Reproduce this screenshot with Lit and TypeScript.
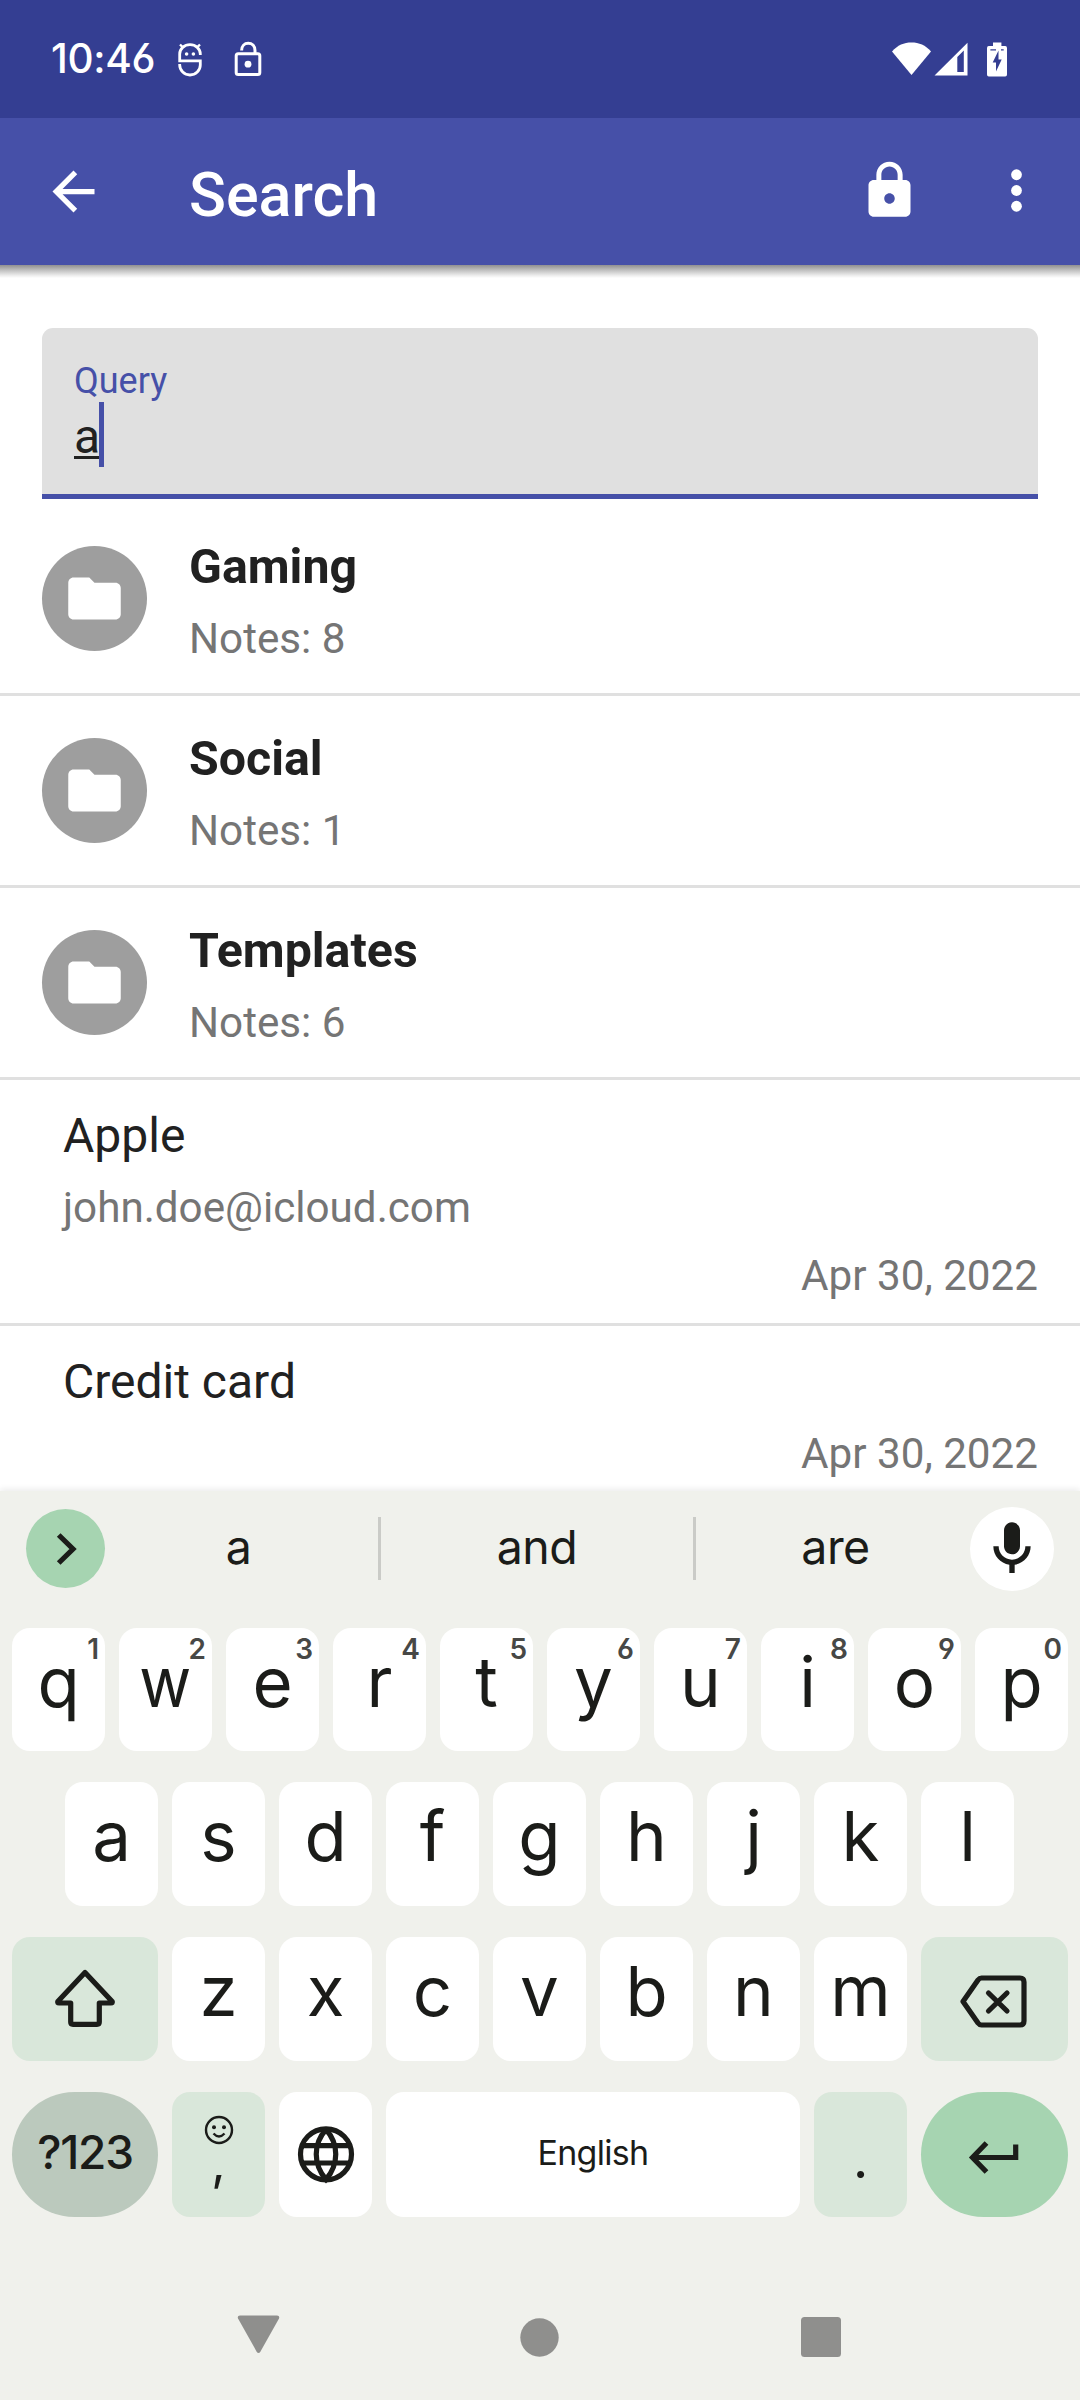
import { LitElement, html, css, svg, nothing } from "lit";
import { customElement, property, state } from "lit/decorators.js";
import { classMap } from "lit/directives/class-map.js";

interface Folder {
  name: string;
  count: number;
}

interface Note {
  title: string;
  detail?: string;
  date: string;
}

@customElement("status-bar")
export class StatusBar extends LitElement {
  static styles = css`
    :host {
      display: flex;
      align-items: center;
      justify-content: space-between;
      box-sizing: border-box;
      height: 118px;
      flex: none;
      padding: 0 73px 0 51px;
      background: #343e92;
      color: #fff;
    }
    .side {
      display: flex;
      align-items: center;
    }
    .clock {
      font: 500 40.5px/48px Inter, sans-serif;
      font-feature-settings: "cv03", "cv04";
      letter-spacing: -0.3px;
      width: 105px;
      white-space: nowrap;
    }
    svg {
      display: block;
      fill: #fff;
    }
    .line {
      fill: none;
      stroke: #fff;
    }
    .agent {
      margin: 2px 0 0 20px;
    }
    .unlocked {
      margin-left: 30px;
    }
    .signal {
      margin-left: 3px;
    }
    .battery {
      margin-left: 19px;
    }
    .cut {
      fill: #343e92;
    }
  `;

  render() {
    return html`
      <div class="side">
        <span class="clock">10:46</span>
        <svg class="agent" width="28" height="36" viewBox="-14 -18 28 36">
          <path class="line" stroke-width="2.8" d="M10.3 -5V-6A10.3 9.4 0 0 0 -10.3 -6V0.8H10.3V5A10.3 10 0 0 1 -10.3 5V4" />
          <path class="line" stroke-width="2.4" d="M-10 -15.5L-6.6 -12.2M10 -15.5L6.6 -12.2" />
          <circle cx="-3.4" cy="-6" r="1.8" />
          <circle cx="3.4" cy="-6" r="1.8" />
        </svg>
        <svg class="unlocked" width="28" height="36" viewBox="0 0 28 36">
          <rect class="line" stroke-width="3" x="2.2" y="12.8" width="23.6" height="20.8" rx="2" />
          <path class="line" stroke-width="3" d="M7.6 9.5C7.6 5 10.5 2.2 14.2 2.2S21 5 21 9.5V13" />
          <circle cx="14" cy="23.2" r="3.4" />
        </svg>
      </div>
      <div class="side">
        <svg width="39" height="34" viewBox="0 0 39 34">
          <path d="M0 9.5C5.5 3 12 0.4 19.5 0.4S33.5 3 39 9.5L19.5 33Z" />
        </svg>
        <svg class="signal" width="34" height="34" viewBox="0 0 34 34">
          <path fill-rule="evenodd" d="M0.5 33.5L33.5 0.8V33.5ZM23.3 15V30H29.8V8.5Z" />
        </svg>
        <svg class="battery" width="20" height="35" viewBox="0 0 20 35">
          <path d="M6 0.5H14.4V4H18.2Q20 4 20 6V32.6Q20 34.5 18.2 34.5H1.8Q0 34.5 0 32.6V6Q0 4 1.8 4H6Z" />
          <path class="cut" d="M11.5 8.500L5.7 20.5H9V29.5L14.7 17.5H11.5ZM3.4 7.3H9V8.4H3.4ZM14 7.3H16.7V8.4H14Z" />
        </svg>
      </div>
    `;
  }
}

@customElement("app-bar")
export class AppBar extends LitElement {
  @property() heading = "";

  static styles = css`
    :host {
      display: flex;
      align-items: center;
      box-sizing: border-box;
      height: 147px;
      flex: none;
      padding: 0 32px 0 42px;
      background: #4650a8;
      color: #fff;
    }
    svg {
      display: block;
      width: 63px;
      height: 63px;
      fill: #fff;
    }
    .heading {
      margin: 6px auto 0 84px;
      font: 500 61px/72px Roboto, sans-serif;
    }
    .lock {
      margin: 0 64px 2px 0;
    }
    .more {
      margin-bottom: 2px;
    }
  `;

  render() {
    return html`
      <svg viewBox="0 0 24 24"><path d="M20 11H7.83l5.59-5.59L12 4l-8 8 8 8 1.41-1.41L7.83 13H20v-2z" /></svg>
      <span class="heading">${this.heading}</span>
      <svg class="lock" viewBox="0 0 24 24">
        <path d="M18 8h-1V6c0-2.760-2.240-5-5-5S7 3.240 7 6v2H6c-1.100 0-2 .9-2 2v10c0 1.100.9 2 2 2h12c1.100 0 2-.9 2-2V10c0-1.100-.9-2-2-2zm-6 9c-1.100 0-2-.9-2-2s.9-2 2-2 2 .9 2 2-.9 2-2 2zm3.100-9H8.900V6c0-1.710 1.390-3.100 3.100-3.100 1.710 0 3.100 1.390 3.100 3.100v2z" />
      </svg>
      <svg class="more" viewBox="0 0 24 24">
        <circle cx="12" cy="6" r="2.05" /><circle cx="12" cy="12" r="2.05" /><circle cx="12" cy="18" r="2.05" />
      </svg>
    `;
  }
}

@customElement("search-results")
export class SearchResults extends LitElement {
  @property() query = "";
  @property({ attribute: false }) folders: Folder[] = [];
  @property({ attribute: false }) notes: Note[] = [];

  static styles = css`
    :host {
      display: flex;
      flex-direction: column;
      flex: 1;
      min-height: 0;
      overflow: hidden;
      background: #fff;
      font-family: Roboto, sans-serif;
    }
    .shade {
      flex: none;
      height: 13px;
      background: linear-gradient(#909090, #c0c0c0 40%, #ececec 80%, #fff);
    }
    .field {
      flex: none;
      box-sizing: border-box;
      height: 171px;
      margin: 50px 42px 5px;
      padding: 32px 32px 0;
      background: #e0e0e0;
      border-radius: 11px 11px 0 0;
      border-bottom: 5px solid #4650a8;
    }
    .label {
      font-size: 36px;
      line-height: 42px;
      color: #4650a8;
    }
    .entry {
      display: flex;
      height: 65px;
      font-size: 48px;
      line-height: 69px;
      color: #212121;
    }
    .typed {
      text-decoration: underline;
      text-decoration-thickness: 3px;
      text-underline-offset: 3px;
      text-decoration-skip-ink: none;
    }
    .caret {
      width: 5px;
      height: 65px;
      margin-left: -1px;
      background: #4650a8;
    }
    .folder {
      flex: none;
      box-sizing: border-box;
      display: flex;
      height: 192px;
      gap: 42px;
      padding-left: 42px;
      border-bottom: 3px solid #e0e0e0;
    }
    .badge {
      display: grid;
      place-items: center;
      width: 105px;
      height: 105px;
      margin-top: 42px;
      border-radius: 50%;
      background: #9e9e9e;
    }
    .badge svg {
      width: 63px;
      height: 63px;
      fill: #fff;
    }
    .text {
      display: flex;
      flex-direction: column;
      gap: 18.5px;
      padding-top: 35px;
    }
    .title {
      font-size: 48px;
      line-height: 56px;
      color: #212121;
    }
    .folder .title {
      font-size: 48.3px;
      font-weight: 700;
    }
    .sub {
      font-size: 42.2px;
      line-height: 50px;
      color: #757575;
    }
    .note {
      flex: none;
      display: flex;
      flex-direction: column;
      gap: 18.5px;
      box-sizing: border-box;
      padding: 28px 42px 0 63px;
      border-bottom: 3px solid #e0e0e0;
    }
    .note .sub:last-child {
      text-align: right;
      padding-bottom: 22px;
    }
  `;

  render() {
    return html`
      <div class="shade"></div>
      <div class="field">
        <div class="label">Query</div>
        <div class="entry"><span class="typed">${this.query}</span><span class="caret"></span></div>
      </div>
      ${this.folders.map(
        (f) => html`
          <div class="folder">
            <div class="badge">
              <svg viewBox="0 0 24 24"><path d="M10 4H4c-1.100 0-1.990.9-1.990 2L2 18c0 1.100.9 2 2 2h16c1.100 0 2-.9 2-2V8c0-1.100-.9-2-2-2h-8l-2-2z" /></svg>
            </div>
            <div class="text">
              <div class="title">${f.name}</div>
              <div class="sub">Notes: ${f.count}</div>
            </div>
          </div>
        `
      )}
      ${this.notes.map(
        (n) => html`
          <div class="note">
            <div class="title">${n.title}</div>
            ${n.detail ? html`<div class="sub">${n.detail}</div>` : nothing}
            <div class="sub">${n.date}</div>
          </div>
        `
      )}
    `;
  }
}

const shiftIcon = svg`<path class="pen" d="M0 -26.500L-27.200 2.500Q-28 4 -26 4H-14.300V23Q-14.300 25.300 -12 25.300H12Q14.300 25.300 14.300 23V4H26Q28 4 27.200 2.500Z" />`;
const backspaceIcon = svg`<path class="pen" d="M-32 2.500L-17 -19Q-15.500 -21 -13.500 -21H25Q29 -21 29 -17V22Q29 26 25 26H-13.500Q-15.500 26 -17 24Z" /><path class="pen cap" d="M-6.500 -6L12 12M12 -6L-6.500 12" />`;
const enterIcon = svg`<path class="pen" d="M20.700 -10.500V2.500H-21M-8.500 -12L-22.500 2.500L-8.500 17" />`;
const globeIcon = svg`<circle class="pen" cx="0" cy="-0.700" r="25.500" /><path class="pen" d="M0 -25.500C-13 -11 -13 9 0 24.500C13 9 13 -11 0 -25.500M-23 -9.400H23M-23 8H23" />`;

@customElement("soft-keyboard")
export class SoftKeyboard extends LitElement {
  @property({ attribute: false }) words: string[] = [];

  static styles = css`
    :host {
      display: flex;
      flex-direction: column;
      flex: none;
      height: 909px;
      background: #f0f1ec;
      color: #1b1c19;
      font-family: Inter, sans-serif;
      box-shadow: 0 -2px 6px rgba(0, 0, 0, 0.08);
      z-index: 1;
    }
    svg {
      display: block;
      overflow: visible;
    }
    .pen {
      fill: none;
      stroke: #1b1c19;
      stroke-width: 5.2;
    }
    .thin {
      stroke-width: 2.4;
    }
    .tint .pen {
      stroke-linejoin: round;
    }
    .cap {
      stroke-linecap: round;
    }
    .strip {
      display: grid;
      grid-template-columns: 99px 279px 3px 312px 3px 279px 1fr;
      align-items: center;
      justify-items: center;
      height: 115px;
      margin-bottom: 22px;
    }
    .expand {
      display: grid;
      place-items: center;
      justify-self: end;
      width: 79px;
      height: 79px;
      margin-right: -6px;
      border-radius: 50%;
      background: #a6d4b1;
    }
    .mic {
      display: grid;
      place-items: center;
      justify-self: start;
      width: 84px;
      height: 84px;
      margin-left: -5px;
      border-radius: 50%;
      background: #fff;
    }
    .word {
      font-size: 46.5px;
      line-height: 58px;
      padding-bottom: 4px;
      letter-spacing: -0.5px;
    }
    .rule {
      width: 3px;
      height: 63px;
      background: #cacbc7;
    }
    .rows {
      display: grid;
      grid-template-rows: 123px 124px 124px 125px;
      row-gap: 31px;
      padding: 0 12px;
    }
    .row {
      display: flex;
      gap: 14px;
    }
    .row.inset {
      padding-left: 53px;
    }
    .key {
      position: relative;
      display: flex;
      align-items: center;
      justify-content: center;
      box-sizing: border-box;
      width: 93px;
      flex: none;
      padding-bottom: 16px;
      border-radius: 18px;
      background: #fff;
      font-size: 69px;
      line-height: 84px;
    }
    .key.plain {
      padding-bottom: 0;
    }
    .key.wide {
      width: 146px;
    }
    .key.wide:last-child {
      width: 147px;
    }
    .key.tint {
      background: #d9e7da;
    }
    .key.pill {
      border-radius: 63px;
    }
    .key.symbols {
      background: #bbc9bd;
      font-size: 46px;
      font-weight: 500;
      padding-bottom: 5px;
      letter-spacing: -1.2px;
    }
    .key.enter {
      background: #a6d4b1;
    }
    .key.space {
      flex: 1;
      font-size: 34px;
      padding-bottom: 3px;
      letter-spacing: -0.7px;
    }
    .key.comma {
      flex-direction: column;
      justify-content: flex-start;
      padding: 23px 0 0;
      font-size: 50px;
      line-height: 34px;
    }
    .key.stop {
      padding: 4px 0 0;
      font-family: Lato, sans-serif;
      font-size: 56px;
      line-height: 60px;
    }
    .narrow {
      transform: scaleX(0.92);
    }
    .hint {
      position: absolute;
      top: 7px;
      right: 6px;
      font-size: 28px;
      line-height: 28px;
      font-weight: 600;
      color: #474846;
      font-feature-settings: "cv03", "cv04";
    }
    .nav {
      display: grid;
      grid-template-columns: repeat(3, 1fr);
      justify-items: center;
      align-items: center;
      flex: 1;
      padding: 57px 118px 0;
      fill: #8f8f8d;
    }
  `;

  private letters(chars: string, hints = "") {
    return [...chars].map(
      (c, i) => html`<div class="key">
        <span class=${classMap({ narrow: c === "w" })}>${c}</span>${hints ? html`<span class="hint">${hints[i]}</span>` : nothing}
      </div>`
    );
  }

  private iconKey(kind: Record<string, boolean>, icon: unknown) {
    return html`<div class=${classMap({ key: true, plain: true, ...kind })}>
      <svg width="72" height="64" viewBox="-36 -32 72 64">${icon}</svg>
    </div>`;
  }

  render() {
    const [first, second, third] = this.words;
    return html`
      <div class="strip">
        <div class="expand">
          <svg width="32" height="40" viewBox="-16 -20 32 40"><path class="pen" d="M-7.3 -14L7 0L-7.3 14" /></svg>
        </div>
        <span class="word">${first}</span>
        <span class="rule"></span>
        <span class="word">${second}</span>
        <span class="rule"></span>
        <span class="word">${third}</span>
        <div class="mic">
          <svg width="64" height="64" viewBox="0 0 24 24" fill="#1b1c19">
            <path d="M12 14c1.660 0 3-1.340 3-3V5c0-1.660-1.340-3-3-3S9 3.340 9 5v6c0 1.660 1.340 3 3 3zM17 11c0 2.760-2.240 5-5 5s-5-2.240-5-5H5c0 3.530 2.610 6.430 6 6.920V21h2v-3.080c3.390-.49 6-3.390 6-6.920h-2z" />
          </svg>
        </div>
      </div>
      <div class="rows">
        <div class="row">${this.letters("qwertyuiop", "1234567890")}</div>
        <div class="row inset">${this.letters("asdfghjkl")}</div>
        <div class="row">
          ${this.iconKey({ wide: true, tint: true }, shiftIcon)} ${this.letters("zxcvbnm")}
          ${this.iconKey({ wide: true, tint: true }, backspaceIcon)}
        </div>
        <div class="row">
          <div class="key wide pill symbols">?123</div>
          <div class="key tint comma">
            <svg width="30" height="30" viewBox="-15 -15 30 30">
              <circle class="pen thin" r="13" />
              <circle cx="-5" cy="-2.7" r="2" fill="#1b1c19" /><circle cx="5" cy="-2.7" r="2" fill="#1b1c19" />
              <path class="pen thin" d="M-5.5 3.5Q0 9.5 5.5 3.5" />
            </svg>
            <span>,</span>
          </div>
          ${this.iconKey({}, globeIcon)}
          <div class="key space">English</div>
          <div class="key tint stop">.</div>
          ${this.iconKey({ wide: true, pill: true, enter: true }, enterIcon)}
        </div>
      </div>
      <div class="nav">
        <svg width="42" height="44" viewBox="0 0 42 44"><path d="M2 0.5H39Q42 0.5 41 3.5L22.500 36.5Q20.500 39.5 18.500 36.5L0 3.5Q-1 0.5 2 0.5Z" /></svg>
        <svg width="39" height="39" viewBox="0 0 39 39"><circle cx="19.5" cy="19.5" r="19.2" /></svg>
        <svg width="40" height="40" viewBox="0 0 40 40"><rect width="40" height="40" rx="3.5" /></svg>
      </div>
    `;
  }
}

@customElement("app-root")
export class AppRoot extends LitElement {
  @state() private folders: Folder[] = [
    { name: "Gaming", count: 8 },
    { name: "Social", count: 1 },
    { name: "Templates", count: 6 },
  ];

  @state() private notes: Note[] = [
    { title: "Apple", detail: "john.doe@icloud.com", date: "Apr 30, 2022" },
    { title: "Credit card", date: "Apr 30, 2022" },
  ];

  static styles = css`
    :host {
      display: flex;
      flex-direction: column;
      width: 1080px;
      height: 2400px;
      overflow: hidden;
    }
  `;

  render() {
    return html`
      <status-bar></status-bar>
      <app-bar heading="Search"></app-bar>
      <search-results query="a" .folders=${this.folders} .notes=${this.notes}></search-results>
      <soft-keyboard .words=${["a", "and", "are"]}></soft-keyboard>
    `;
  }
}
